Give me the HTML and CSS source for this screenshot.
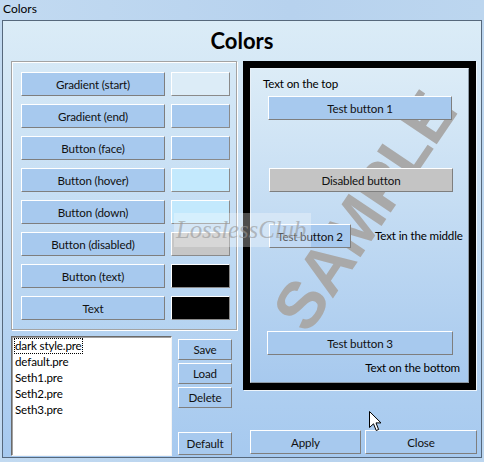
FILE: index.html
```html
<!DOCTYPE html>
<html>
<head>
<meta charset="utf-8">
<title>Colors</title>
<link rel="stylesheet" href="styles.css">
</head>
<body>
<div class="window">
  <div class="titlebar">Colors</div>
  <div class="client">
    <div class="heading">Colors</div>
    <div class="main">
      <div class="leftcol">
        <div class="group">
          <div class="row"><div class="btn cbtn">Gradient (start)</div><div class="swatch sw-start"></div></div>
          <div class="row"><div class="btn cbtn">Gradient (end)</div><div class="swatch sw-end"></div></div>
          <div class="row"><div class="btn cbtn">Button (face)</div><div class="swatch sw-face"></div></div>
          <div class="row"><div class="btn cbtn">Button (hover)</div><div class="swatch sw-hover"></div></div>
          <div class="row"><div class="btn cbtn">Button (down)</div><div class="swatch sw-down"></div></div>
          <div class="row"><div class="btn cbtn">Button (disabled)</div><div class="swatch sw-disabled"></div></div>
          <div class="row"><div class="btn cbtn">Button (text)</div><div class="swatch sw-text"></div></div>
          <div class="row"><div class="btn cbtn">Text</div><div class="swatch sw-text"></div></div>
        </div>
        <div class="presets">
          <div class="listbox">
            <div class="item focused">dark style.pre</div>
            <div class="item">default.pre</div>
            <div class="item">Seth1.pre</div>
            <div class="item">Seth2.pre</div>
            <div class="item">Seth3.pre</div>
          </div>
          <div class="pbtns">
            <div class="btn sbtn">Save</div>
            <div class="btn sbtn">Load</div>
            <div class="btn sbtn">Delete</div>
            <div class="btn sbtn default">Default</div>
          </div>
        </div>
      </div>
      <div class="rightcol">
        <div class="preview">
          <div class="canvas">
            <div class="sample">SAMPLE</div>
            <div class="ptext top">Text on the top</div>
            <div class="btn tb1">Test button 1</div>
            <div class="btn disabled">Disabled button</div>
            <div class="midrow">
              <div class="btn tb2">Test button 2</div>
              <div class="ptext">Text in the middle</div>
            </div>
            <div class="btn tb3">Test button 3</div>
            <div class="ptext bottom">Text on the bottom</div>
          </div>
        </div>
        <div class="actions">
          <div class="btn abtn">Apply</div>
          <div class="btn abtn">Close</div>
        </div>
      </div>
    </div>
  </div>
</div>
<div class="lc">LosslessClub</div>
<svg class="cursor" width="14" height="22" viewBox="0 0 14 22"><path d="M0.5 0.5 L0.5 16.5 L4.5 12.8 L7.2 19.5 L9.6 18.5 L7 11.9 L12 11.9 Z" fill="#fff" stroke="#000" stroke-width="1"/></svg>
</body>
</html>
```

FILE: styles.css
```css
* { box-sizing: border-box; }
body {
  margin: 0;
  width: 484px;
  height: 462px;
  overflow: hidden;
  position: relative;
  background: linear-gradient(90deg, #c2daf1, #b7d2ee 60%, #bcd6ef);
  font-family: Lato, "Noto Sans", sans-serif;
  font-size: 11.6px;
  letter-spacing: -0.15px;
  color: #000;
}
.titlebar {
  height: 20px;
  padding-left: 3px;
  line-height: 18px;
  font-size: 12px;
  letter-spacing: 0;
  color: #000;
}
.client {
  margin: 0 2px;
  height: 438px;
  border: 1px solid #56687c;
  background: linear-gradient(#dbecf7, #a6c9ef);
}
.heading {
  height: 40px;
  line-height: 39px;
  text-align: center;
  font-weight: bold;
  font-size: 22px;
  letter-spacing: 0;
  padding-left: 0;
}
.main {
  display: flex;
  padding-left: 8px;
}
.leftcol { width: 226px; }
.rightcol { width: 234px; margin-left: 6px; }

.btn {
  background: #a7c9ee;
  border: 1px solid;
  border-color: #ffffff #7e7e7e #7e7e7e #ffffff;
  text-align: center;
  display: flex;
  align-items: center;
  justify-content: center;
  color: #111;
}
.group {
  height: 269px;
  border: 1px solid #a3a3a3;
  box-shadow: inset 1px 1px 0 #fff, 1px 1px 0 #fff;
  padding: 10px 0 0 9px;
  display: flex;
  flex-direction: column;
  gap: 8px;
}
.row { display: flex; gap: 6px; }
.cbtn { width: 144px; height: 24px; }
.swatch {
  width: 59px;
  height: 24px;
  border: 1px solid;
  border-color: #ffffff #8a8a8a #8a8a8a #ffffff;
}
.sw-start { background: #dcecf7; }
.sw-end, .sw-face { background: #a7c9ee; }
.sw-hover, .sw-down { background: #c3e9fd; }
.sw-disabled { background: #c6c6c6; }
.sw-text { background: #000; }

.presets {
  display: flex;
  margin-top: 6px;
  height: 120px;
}
.listbox {
  width: 161px;
  height: 120px;
  background: #fff;
  border: 1px solid;
  border-color: #6a6a6a #f4f4f4 #f4f4f4 #6a6a6a;
  box-shadow: inset 1px 1px 0 #a0a0a0;
  padding: 1px 0 0 2px;
}
.item {
  height: 16px;
  line-height: 15px;
  padding-left: 1px;
  display: table;
  padding-right: 1px;
}
.item.focused { outline: 1px dotted #000; outline-offset: -1px; }
.pbtns {
  width: 54px;
  margin-left: 6px;
  padding-top: 3px;
  display: flex;
  flex-direction: column;
  gap: 3px;
}
.sbtn { height: 21px; }
.sbtn.default { margin-top: auto; height: 23px; margin-bottom: 1px; }

.preview {
  width: 233px;
  height: 329px;
  border: 7px solid #000;
  box-shadow: 1px 1px 0 #eef5fb;
}
.canvas {
  position: relative;
  height: 100%;
  overflow: hidden;
  border: 1px solid;
  border-color: #e8f0f7 #8e9aa6 #8e9aa6 #e8f0f7;
  background: linear-gradient(#dcecf7, #a7c9ee);
  display: flex;
  flex-direction: column;
}
.sample {
  position: absolute;
  left: 113px;
  top: 142px;
  transform: translate(-50%, -50%) rotate(-56deg);
  font-family: "Liberation Sans", Arial, sans-serif;
  font-weight: bold;
  font-size: 66px;
  line-height: 66px;
  color: #a9a9a9;
  white-space: nowrap;
  letter-spacing: -1px;
}
.ptext { position: relative; height: 16px; line-height: 16px; white-space: nowrap; }
.ptext.top { margin: 7px 0 0 12px; }
.btn.tb1, .btn.disabled, .btn.tb2, .btn.tb3 { position: relative; height: 24px; }
.tb1 { margin: 4px 0 0 17px; width: 184px; }
.disabled { margin: 48px 0 0 18px; width: 184px; background: #c4c4c4; }
.midrow { display: flex; align-items: center; margin: 32px 0 0 18px; gap: 24px; }
.tb2 { width: 82px; }
.tb3 { margin: 83px 0 0 16px; width: 186px; }
.ptext.bottom { margin: 5px 8px 0 0; text-align: right; }

.actions {
  display: flex;
  gap: 4px;
  margin-top: 40px;
  padding-left: 7px;
}
.abtn { height: 24px; width: 111px; }
.abtn + .abtn { width: 112px; }

.lc {
  position: absolute;
  left: 174px;
  top: 213px;
  width: 137px;
  height: 34px;
  background: rgba(255, 255, 255, 0.3);
  font-family: "Liberation Serif", serif;
  font-style: italic;
  font-size: 25px;
  line-height: 34px;
  color: rgba(150, 150, 150, 0.6);
  padding-left: 2px;
  white-space: nowrap;
  overflow: hidden;
}
.cursor {
  position: absolute;
  left: 369px;
  top: 411px;
}
```
